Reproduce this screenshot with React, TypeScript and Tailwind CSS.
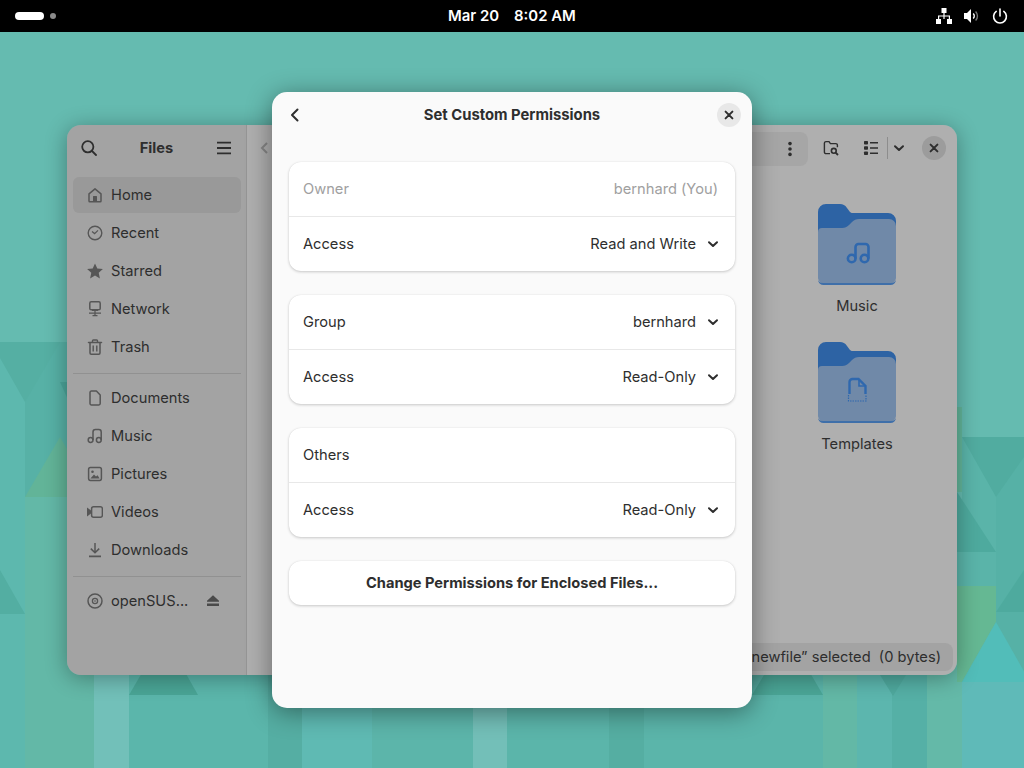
import React from 'react';

type IconProps = { className?: string };

const Chevron = ({ className = '' }: IconProps) => (
  <svg viewBox="0 0 16 16" className={`w-4 h-4 ${className}`} fill="none" stroke="currentColor" strokeWidth="2" strokeLinecap="round" strokeLinejoin="round">
    <path d="M4 6.2 8 10l4-3.8" />
  </svg>
);

const CloseX = () => (
  <svg viewBox="0 0 16 16" className="w-4 h-4" fill="none" stroke="currentColor" strokeWidth="2" strokeLinecap="round">
    <path d="M4.6 4.6l6.8 6.8M11.4 4.6l-6.8 6.8" />
  </svg>
);

const sidebarIcons: Record<string, React.ReactNode> = {
  Home: (
    <>
      <path d="M2 14V6.8L8 1.8l6 5V14a.8.8 0 0 1-.8.8H2.8A.8.8 0 0 1 2 14z" fill="none" stroke="currentColor" strokeWidth="1.5" strokeLinejoin="round" />
      <rect x="6" y="9" width="4" height="5.5" rx=".6" fill="currentColor" />
    </>
  ),
  Recent: (
    <>
      <circle cx="8" cy="8" r="6.8" fill="none" stroke="currentColor" strokeWidth="1.4" />
      <path d="M5 6.6 7.6 8.6 11 5.4" fill="none" stroke="currentColor" strokeWidth="1.2" />
    </>
  ),
  Starred: <path d="M8 .4l2.3 5.1 5.6.6-4.2 3.7 1.2 5.6L8 12.6l-4.9 2.8 1.2-5.6L.1 6.1l5.6-.6z" fill="currentColor" />,
  Network: (
    <>
      <rect x="2.8" y=".8" width="10.4" height="8" rx="1.4" fill="none" stroke="currentColor" strokeWidth="1.5" />
      <path d="M5 8h6v2H5z" fill="currentColor" />
      <path d="M8 10v4M2 12.2h12" stroke="currentColor" strokeWidth="1.3" />
      <path d="M5.5 14.6h5" stroke="currentColor" strokeWidth="1.3" />
    </>
  ),
  Trash: (
    <>
      <path d="M1.5 3.5h13" stroke="currentColor" strokeWidth="1.5" strokeLinecap="round" />
      <path d="M5.5 3.2V1.8a.8.8 0 0 1 .8-.8h3.4a.8.8 0 0 1 .8.8v1.4" fill="none" stroke="currentColor" strokeWidth="1.4" />
      <path d="M3 3.6V14a1.2 1.2 0 0 0 1.2 1.2h7.6A1.2 1.2 0 0 0 13 14V3.6" fill="none" stroke="currentColor" strokeWidth="1.5" />
      <path d="M6.2 6.5v6M9.8 6.5v6" stroke="currentColor" strokeWidth="1.4" />
    </>
  ),
  Documents: <path d="M3 2.4A1.4 1.4 0 0 1 4.4 1h5L13.2 5v8.6a1.4 1.4 0 0 1-1.4 1.4H4.4A1.4 1.4 0 0 1 3 13.6z" fill="none" stroke="currentColor" strokeWidth="1.5" strokeLinejoin="round" />,
  Music: (
    <>
      <circle cx="3.6" cy="12" r="2.4" fill="none" stroke="currentColor" strokeWidth="1.5" />
      <circle cx="11.8" cy="12" r="2.4" fill="none" stroke="currentColor" strokeWidth="1.5" />
      <path d="M6 12V4a2.4 2.4 0 0 1 2.4-2.4h3.4A2.4 2.4 0 0 1 14.2 4v8" fill="none" stroke="currentColor" strokeWidth="1.5" />
    </>
  ),
  Pictures: (
    <>
      <rect x="1.6" y="1.6" width="12.8" height="12.8" rx="1.8" fill="none" stroke="currentColor" strokeWidth="1.5" />
      <circle cx="5.5" cy="5.8" r="1.3" fill="currentColor" />
      <path d="M3.4 12.6 7 8.6l2 2 1.6-1.4 2 3.4z" fill="currentColor" />
    </>
  ),
  Videos: (
    <>
      <path d="M0 3.4l4 3v3.2l-4 3z" fill="currentColor" />
      <rect x="4.6" y="2.8" width="10.8" height="10.4" rx="2" fill="none" stroke="currentColor" strokeWidth="1.5" />
    </>
  ),
  Downloads: (
    <>
      <path d="M8 1v9M3.8 6.6 8 10.8l4.2-4.2" fill="none" stroke="currentColor" strokeWidth="1.5" />
      <path d="M2 14.4h12" stroke="currentColor" strokeWidth="1.6" />
    </>
  ),
  openSUS: (
    <>
      <circle cx="8" cy="8" r="7" fill="none" stroke="currentColor" strokeWidth="1.5" />
      <circle cx="8" cy="8" r="2.6" fill="none" stroke="currentColor" strokeWidth="1.3" />
      <circle cx="8" cy="8" r=".8" fill="currentColor" />
    </>
  ),
};

const SidebarRow = ({ name, label, active }: { name: string; label: string; active?: boolean }) => (
  <div className={`h-9 flex items-center pl-[14px] pr-4 rounded-[6px] ${active ? 'bg-[#999999]' : ''}`}>
    <svg viewBox="0 0 16 16" className="w-4 h-4 text-[#565656] shrink-0">{sidebarIcons[name]}</svg>
    <span className="ml-2 flex-1 text-[#2e2e2e]">{label}</span>
    {name === 'openSUS' && (
      <svg viewBox="0 0 16 16" className="w-4 h-4 text-[#4a4a4a] mr-1" fill="currentColor">
        <path d="M8 2.2l6 5.6v1H2v-1zM2 10.6h12V13H2z" />
      </svg>
    )}
  </div>
);

const Sidebar = () => (
  <div className="w-[180px] shrink-0 bg-[#a3a3a3] border-r border-[#969696] flex flex-col">
    <div className="h-[46px] flex items-center justify-between pl-[14px] pr-[15px] shrink-0">
      <svg viewBox="0 0 16 16" className="w-4 h-4 text-[#2e2e2e]" fill="none" stroke="currentColor" strokeWidth="1.8" strokeLinecap="round">
        <circle cx="6.8" cy="6.8" r="5.6" />
        <path d="M11 11l4 4" />
      </svg>
      <span className="font-bold text-[#2e2e2e]">Files</span>
      <svg viewBox="0 0 16 16" className="w-4 h-4 text-[#2e2e2e] mr-[-1px]" fill="none" stroke="currentColor" strokeWidth="1.8">
        <path d="M1 2.6h14M1 8h14M1 13.4h14" />
      </svg>
    </div>
    <div className="pl-[6px] pr-[5px] pt-[6px] flex flex-col gap-[2px]">
      <SidebarRow name="Home" label="Home" active />
      <SidebarRow name="Recent" label="Recent" />
      <SidebarRow name="Starred" label="Starred" />
      <SidebarRow name="Network" label="Network" />
      <SidebarRow name="Trash" label="Trash" />
      <div className="h-px bg-[#919191] mt-[6px] mb-[4px]" />
      <SidebarRow name="Documents" label="Documents" />
      <SidebarRow name="Music" label="Music" />
      <SidebarRow name="Pictures" label="Pictures" />
      <SidebarRow name="Videos" label="Videos" />
      <SidebarRow name="Downloads" label="Downloads" />
      <div className="h-px bg-[#919191] mt-[6px] mb-[4px]" />
      <SidebarRow name="openSUS" label="openSUS..." />
    </div>
  </div>
);

const Folder = ({ children }: { children: React.ReactNode }) => (
  <svg viewBox="0 0 78 81" className="w-[78px] h-[81px]">
    <path d="M0 8a8 8 0 0 1 8-8h14c3 0 5 1 7 4l3 4c1 1 2 1 4 1h34a8 8 0 0 1 8 8v40H0z" fill="#2d63a4" />
    <path d="M0 28v44a7 7 0 0 0 7 8h64a7 7 0 0 0 7-8V22a7 7 0 0 0-7-7H41c-3 0-5 1-7 3l-3 3c-2 2-4 3-7 3H4a4 4 0 0 0-4 4z" fill="#7089a8" />
    <path d="M0 76a6 6 0 0 0 6 5h66a6 6 0 0 0 6-5 6 6 0 0 1-6 3H6a6 6 0 0 1-6-3z" fill="#3f6fa9" />
    {children}
  </svg>
);

const FolderItem = ({ label, children }: { label: string; children: React.ReactNode }) => (
  <div className="flex flex-col items-center w-[110px]">
    <Folder>{children}</Folder>
    <span className="mt-[11px] leading-[20px] text-[#2e2e2e]">{label}</span>
  </div>
);

const FilesContent = () => (
  <div className="flex-1 min-w-0 bg-[#afafaf] flex flex-col">
    <div className="h-[46px] shrink-0 flex items-center pl-[10px] pr-[11px]">
      <svg viewBox="0 0 16 16" className="w-4 h-4 text-[#858585] shrink-0" fill="none" stroke="currentColor" strokeWidth="2">
        <path d="M10 3 5 8l5 5" />
      </svg>
      <div className="flex-1 h-[34px] ml-4 mt-[1px] bg-[#a6a6a6] rounded-[8px] flex items-center justify-end pr-[10px] text-[#2e2e2e]">
        <svg viewBox="0 0 16 16" className="w-4 h-4" fill="currentColor">
          <circle cx="8" cy="2.6" r="1.8" />
          <circle cx="8" cy="8" r="1.8" />
          <circle cx="8" cy="13.4" r="1.8" />
        </svg>
      </div>
      <svg viewBox="0 0 16 16" className="w-4 h-4 ml-[15px] text-[#2e2e2e] shrink-0" fill="none" stroke="currentColor" strokeWidth="1.4">
        <path d="M7 13.6H3a1.6 1.6 0 0 1-1.6-1.6V3A1.6 1.6 0 0 1 3 1.6h3l1.4 2h5.4A1.6 1.6 0 0 1 14.4 5.2v2" />
        <circle cx="10.8" cy="10.8" r="2.4" strokeWidth="1.6" />
        <path d="M12.6 12.6 15 15" strokeWidth="1.8" />
      </svg>
      <svg viewBox="0 0 16 16" className="w-4 h-4 ml-6 text-[#2e2e2e] shrink-0" fill="currentColor">
        <rect x="1" y="1" width="4" height="3.6" rx=".8" />
        <rect x="1" y="6.2" width="4" height="3.6" rx=".8" />
        <rect x="1" y="11.4" width="4" height="3.6" rx=".8" />
        <path d="M7 2h8v1.6H7zM7 7.2h8v1.6H7zM7 12.4h8V14H7z" />
      </svg>
      <div className="w-px h-[22px] bg-[#8d8d8d] ml-2 shrink-0" />
      <Chevron className="ml-[3px] text-[#2e2e2e] shrink-0" />
      <div className="ml-[15px] w-6 h-6 rounded-full bg-[#9c9c9c] flex items-center justify-center text-[#2e2e2e] shrink-0">
        <CloseX />
      </div>
    </div>
    <div className="flex-1 flex flex-col items-end pr-[45px] pt-[33px] gap-[26px]">
      <FolderItem label="Music">
        <g fill="none" stroke="#2f68ae" strokeWidth="2.6">
          <circle cx="33.7" cy="54.5" r="3.8" />
          <circle cx="46.5" cy="54.5" r="3.8" />
          <path d="M37.5 54.5V43a3 3 0 0 1 3-3h7a3 3 0 0 1 3 3v11.5" />
        </g>
      </FolderItem>
      <FolderItem label="Templates">
        <path d="M31.5 52V40a3 3 0 0 1 3-3h6l7 7v8" fill="none" stroke="#2f68ae" strokeWidth="2.4" />
        <path d="M41 37v7h7" fill="none" stroke="#2f68ae" strokeWidth="1.6" />
        <path d="M30.5 53v6h17.500v-6" fill="none" stroke="#2f68ae" strokeWidth="1.2" strokeDasharray="1.5 1" />
      </FolderItem>
    </div>
    <div className="flex justify-end pr-1 pb-1">
      <div className="h-7 bg-[#a3a3a3] rounded-[8px] flex items-center px-3 text-[#2e2e2e] whitespace-pre">“newfile” selected  (0 bytes)</div>
    </div>
  </div>
);

const PermRow = ({ label, value, dim, arrow, border }: { label: string; value?: string; dim?: boolean; arrow?: boolean; border?: boolean }) => (
  <div className={`h-[54px] flex items-center pl-[14px] ${arrow ? 'pr-[14px]' : 'pr-[17px]'} ${dim ? 'text-[#a0a0a0]' : 'text-[#2e2e2e]'} ${border ? 'border-b border-[#e8e8e8] h-[55px]' : ''}`}>
    <span className="flex-1">{label}</span>
    {value && <span>{value}</span>}
    {arrow && <Chevron className="ml-[9px] text-[#2e2e2e]" />}
  </div>
);

const PermGroup = ({ children }: { children: React.ReactNode }) => (
  <div className="bg-white rounded-[12px] shadow-[0_1px_3px_rgba(0,0,0,0.2),0_0_1px_rgba(0,0,0,0.1)] overflow-hidden">{children}</div>
);

const PermissionsDialog = () => (
  <div className="absolute left-[272px] top-[60px] w-[480px] h-[616px] bg-[#fafafa] rounded-[15px] shadow-[0_4px_26px_rgba(0,0,0,0.42)] flex flex-col">
    <div className="h-[46px] shrink-0 flex items-center justify-between px-[11px] relative text-[#2e2e2e]">
      <div className="w-6 h-6 flex items-center justify-center">
        <svg viewBox="0 0 16 16" className="w-4 h-4" fill="none" stroke="currentColor" strokeWidth="2" strokeLinecap="round" strokeLinejoin="round">
          <path d="M10.5 2.500 5 8l5.500 5.500" />
        </svg>
      </div>
      <span className="font-bold text-[14.8px]">Set Custom Permissions</span>
      <div className="w-6 h-6 rounded-full bg-[#e8e8e8] flex items-center justify-center">
        <CloseX />
      </div>
    </div>
    <div className="px-[17px] pt-6 flex flex-col gap-6">
      <PermGroup>
        <PermRow label="Owner" value="bernhard (You)" dim border />
        <PermRow label="Access" value="Read and Write" arrow />
      </PermGroup>
      <PermGroup>
        <PermRow label="Group" value="bernhard" arrow border />
        <PermRow label="Access" value="Read-Only" arrow />
      </PermGroup>
      <PermGroup>
        <PermRow label="Others" border />
        <PermRow label="Access" value="Read-Only" arrow />
      </PermGroup>
      <PermGroup>
        <div className="h-11 flex items-center justify-center font-bold text-[#2e2e2e]">Change Permissions for Enclosed Files...</div>
      </PermGroup>
    </div>
  </div>
);

// low-poly wallpaper, only the parts that show round the windows
const Wallpaper = () => (
  <svg viewBox="0 0 1024 768" className="absolute inset-0 w-full h-full">
    <rect width="1024" height="768" fill="#65bbb0" />
    <rect y="342" width="25" height="426" fill="#5db8ae" />
    <rect x="25" y="342" width="45" height="155" fill="#57b1a6" />
    <rect x="25" y="497" width="69" height="271" fill="#63b8a7" />
    <path d="M0 342h60l-35 60L0 358z" fill="#55afa3" />
    <path d="M60 382h10v22z" fill="#4ba59a" />
    <path d="M25 497 60 437l35 60z" fill="#62b498" />
    <path d="M0 570l25 44H0z" fill="#53aea2" />
    <rect x="94" y="620" width="35" height="148" fill="#72c0b9" />
    <rect x="129" y="620" width="139" height="148" fill="#5bb6ab" />
    <path d="M129 695l35-60 34 60z" fill="#4aa596" />
    <rect x="268" y="620" width="34" height="148" fill="#55aea3" />
    <rect x="302" y="620" width="70" height="148" fill="#5fbab3" />
    <rect x="372" y="620" width="101" height="148" fill="#5cb5aa" />
    <rect x="473" y="620" width="34" height="148" fill="#73bfb8" />
    <rect x="507" y="620" width="102" height="148" fill="#5bb5aa" />
    <rect x="609" y="620" width="35" height="148" fill="#55aea2" />
    <rect x="644" y="620" width="179" height="148" fill="#5bb5aa" />
    <path d="M752 695l36-60 35 60z" fill="#4ba697" />
    <rect x="823" y="660" width="34" height="108" fill="#63b8a6" />
    <rect x="857" y="660" width="35" height="108" fill="#5cb6ae" />
    <rect x="892" y="660" width="35" height="108" fill="#55b0a6" />
    <path d="M880 675h26l-13 21z" fill="#4fa99e" />
    <rect x="927" y="586" width="35" height="182" fill="#64b9a8" />
    <rect x="962" y="437" width="34" height="331" fill="#5ab4a9" />
    <rect x="996" y="437" width="28" height="331" fill="#56b1a6" />
    <path d="M962 437h62v20l-28 40z" fill="#51aca0" />
    <rect x="957" y="407" width="5" height="85" fill="#62b59a" />
    <path d="M957 492l39 60h-39z" fill="#4eaa9e" />
    <rect x="957" y="552" width="39" height="34" fill="#5ab4a9" />
    <path d="M1024 570l-28 42h28z" fill="#4eaa9e" />
    <path d="M957 586h39v36l-34 60h-5z" fill="#65b893" />
    <path d="M996 622l34 60h-68z" fill="#52bdb9" />
    <rect x="962" y="682" width="62" height="86" fill="#5fbab8" />
  </svg>
);

export default function App() {
  return (
    <div className="relative w-screen h-screen overflow-hidden text-[14.67px] bg-[#65bbb0] font-['Inter','Noto_Sans',sans-serif]">
      <Wallpaper />
      <div className="relative h-8 bg-black text-white flex items-center justify-between px-[15px]">
        <div className="flex items-center gap-[6px]">
          <div className="w-[29px] h-2 rounded-full bg-white" />
          <div className="w-[6px] h-[6px] rounded-full bg-[#8a8a8a]" />
        </div>
        <div className="absolute left-[448px] flex gap-[15px] font-semibold text-[14.9px]">
          <span>Mar 20</span>
          <span>8:02 AM</span>
        </div>
        <div className="flex items-center gap-3 mr-[1px]">
          <svg viewBox="0 0 16 16" className="w-4 h-4" fill="currentColor">
            <rect x="5.500" y="0" width="5" height="5" />
            <rect x="0" y="11" width="5" height="5" />
            <rect x="11" y="11" width="5" height="5" />
            <path d="M7.400 5h1.200v2.400H14V11h-1.200V8.600H8.600V11H7.400V8.600H3.200V11H2V7.400h5.400z" />
          </svg>
          <svg viewBox="0 0 16 16" className="w-4 h-4" fill="none">
            <path d="M0 5h3l4-4v14l-4-4H0z" fill="currentColor" />
            <path d="M9.200 5.500a3.500 3.500 0 0 1 0 5" stroke="currentColor" strokeWidth="1.4" />
            <path d="M11.600 3.400a6.600 6.600 0 0 1 0 9.200" stroke="#777777" strokeWidth="1.4" />
          </svg>
          <svg viewBox="0 0 16 16" className="w-4 h-4" fill="none" stroke="currentColor" strokeWidth="1.6" strokeLinecap="round">
            <path d="M8 1v7" />
            <path d="M4.200 3.400a6.400 6.400 0 1 0 7.600 0" />
          </svg>
        </div>
      </div>
      <div className="absolute inset-x-0 top-8 bottom-0">
        <div className="absolute left-[67px] top-[93px] w-[890px] h-[550px] rounded-[14px] overflow-hidden flex shadow-[0_3px_22px_rgba(0,0,0,0.33)]">
          <Sidebar />
          <FilesContent />
        </div>
        <PermissionsDialog />
      </div>
    </div>
  );
}
